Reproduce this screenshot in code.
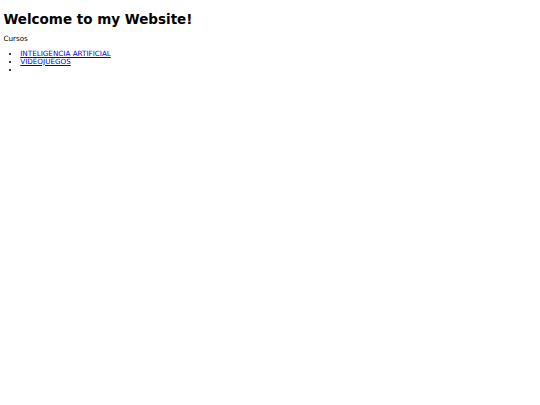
export default function App() {
  return (
    <div className="px-[3.375px] pt-[3px] font-['DejaVu_Sans',sans-serif] text-[7.2px] leading-[8px] text-black">
      <h1 className="text-[13.5px] font-bold my-[8px] leading-[normal]">Welcome to my Website!</h1>
      <p className="my-[6.75px]">Cursos</p>
      <ul className="my-[6.75px] pl-[16.875px] list-disc">
        <li>
          <a href="#" className="text-[#0000ee] underline">INTELIGENCIA ARTIFICIAL</a>
        </li>
        <li>
          <a href="#" className="text-[#0000ee] underline">VIDEOJUEGOS</a>
        </li>
        <li></li>
      </ul>
    </div>
  );
}
